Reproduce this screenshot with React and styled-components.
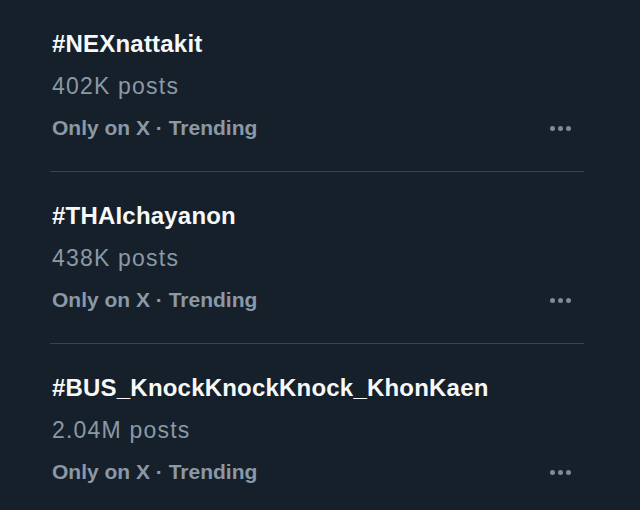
import React from "react";
import styled, { createGlobalStyle } from "styled-components";

const GlobalStyle = createGlobalStyle`
  html, body {
    margin: 0;
    padding: 0;
    background-color: #15202b;
  }

  body {
    font-family: "Liberation Sans", Arial, sans-serif;
    -webkit-font-smoothing: antialiased;
  }
`;

const Container = styled.section`
  width: 640px;
  height: 510px;
  overflow: hidden;
  background-color: #15202b;
  padding: 0 56px 0 50px;
  box-sizing: border-box;
`;

const List = styled.ul`
  list-style: none;
  margin: 0;
  padding: 0;
`;

const Item = styled.li`
  display: flex;
  justify-content: space-between;
  align-items: flex-start;
  padding: 23px 0 22px 2px;
  border-bottom: 1px solid #38444d;
`;

const Info = styled.div`
  display: flex;
  flex-direction: column;
`;

const Title = styled.h3`
  margin: 0;
  font-size: 24px;
  font-weight: 700;
  letter-spacing: 0.2px;
  line-height: 42px;
  color: #f7f9f9;
`;

const Posts = styled.span`
  font-size: 23px;
  letter-spacing: 1.2px;
  line-height: 42px;
  color: #8b98a5;
`;

const Meta = styled.span`
  font-size: 21px;
  font-weight: 700;
  line-height: 42px;
  color: #8b98a5;
`;

const MoreButton = styled.button`
  margin: 84px 7px 0 0;
  width: 34px;
  height: 42px;
  padding: 0;
  border: none;
  background: transparent;
  display: flex;
  align-items: center;
  justify-content: center;
  gap: 3px;
  cursor: pointer;
`;

const Dot = styled.span`
  width: 5px;
  height: 5px;
  border-radius: 50%;
  background-color: #7e8b97;
`;

const trends = [
  { tag: "#NEXnattakit", posts: "402K posts" },
  { tag: "#THAIchayanon", posts: "438K posts" },
  { tag: "#BUS_KnockKnockKnock_KhonKaen", posts: "2.04M posts" },
];

const App = () => {
  return (
    <>
      <GlobalStyle />
      <Container>
        <List>
          {trends.map((t) => (
            <Item key={t.tag}>
              <Info>
                <Title>{t.tag}</Title>
                <Posts>{t.posts}</Posts>
                <Meta>Only on X · Trending</Meta>
              </Info>
              <MoreButton aria-label="More">
                <Dot />
                <Dot />
                <Dot />
              </MoreButton>
            </Item>
          ))}
        </List>
      </Container>
    </>
  );
};

export default App;
